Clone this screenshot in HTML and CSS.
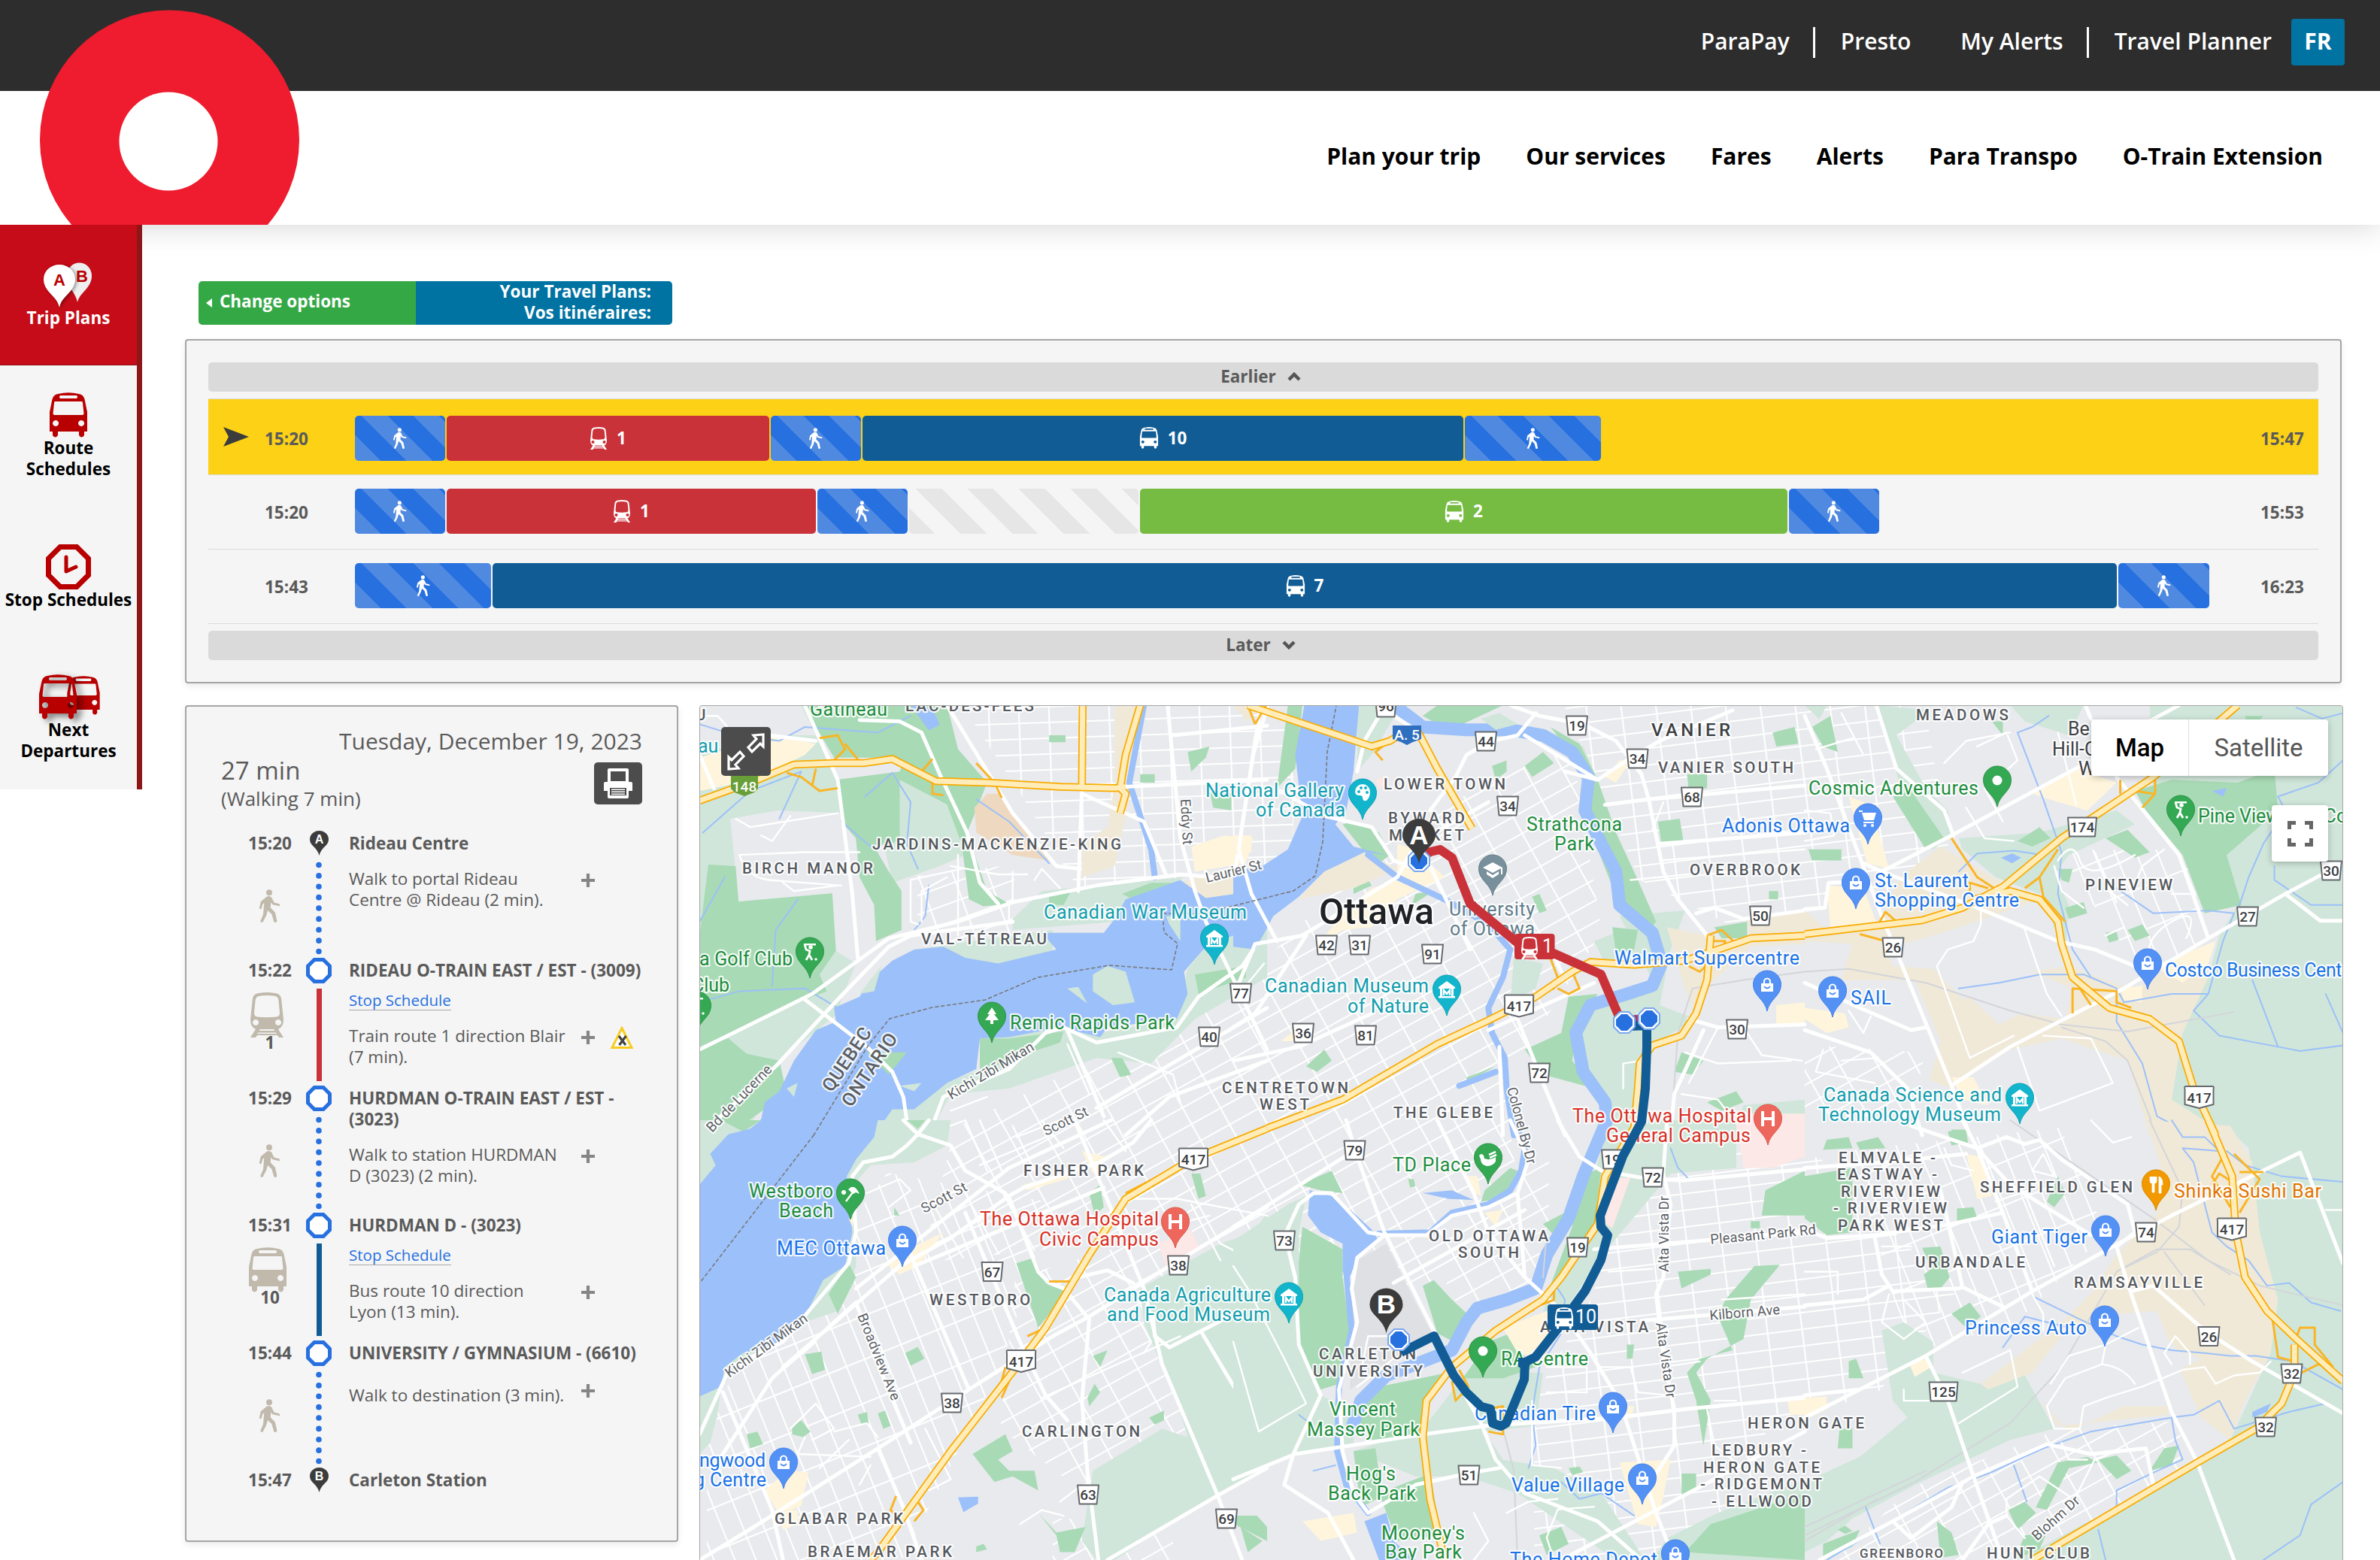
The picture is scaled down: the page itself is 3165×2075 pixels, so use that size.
FILE: index.html
```html
<!DOCTYPE html>
<html lang="en">
<head>
<meta charset="utf-8">
<title>Travel Planner</title>
<link rel="stylesheet" href="styles.css">
</head>
<body>
<svg class="sprite" aria-hidden="true">
  <defs>
    <symbol id="walk" viewBox="0 0 28 44"><circle cx="13" cy="4.3" r="4"/><path d="M10 9.5q3.5-1.500 6 1l3.500 7 6.500 1.800q2 1 .8 3l-9.300-2-2-3-.8 7 6.200 6.500 2.500 11.500q-1 2.600-4 1.200l-3-10.500-5.400-5-2 7-4.500 8.500q-2.500 1-3.200-1.200l3.700-9 1.300-15-2 1.500-1.700 6q-2 1-2.800-1l2-8.600z"/></symbol>
    <symbol id="train" viewBox="0 0 46 60"><path fill-rule="evenodd" d="M12 1q11-2 22 0 7 1 8 7l3 28q0 10-7 13l7 11h-6l-2-3H10l-2 3H1l7-11q-7-3-7-13L4 8q1-6 8-7zM12 5q-4 1-4.500 6L6 27q0 5 4 5.500 13 1.500 26 0 4-.5 4-5.500l-1.500-16Q38 6 34 5 23 3 12 5zM8 36a4 4 0 1 0 .1 0zm30 0a4 4 0 1 0 .1 0zM14 49l-1.500 2h21L32 49zm-3 4.500L10 55h26l-1-1.500z"/></symbol>
    <symbol id="bus" viewBox="0 0 52 60"><path fill-rule="evenodd" d="M12 2q14-3.500 28 0 6 1 7.500 7L51 26v26h-4v5q-3.500 5-7 0v-5H12v5q-3.500 5-7 0v-5H1V26L4.500 9Q6 3 12 2zM15 4q-2 2 0 4h22q2-2 0-4zM8 12q-1 0-1 2L5.500 28q0 2 2 2h37q2 0 2-2L45 14q0-2-1-2zM9 37a4 4 0 1 0 .1 0zm34 0a4 4 0 1 0 .1 0z"/></symbol>
    <symbol id="octagon" viewBox="0 0 34 34"><path d="M11 2.500h12L31.500 11v12L23 31.500H11L2.500 23V11z" fill="#fff" stroke="#2770e0" stroke-width="5"/></symbol>
    <symbol id="plus" viewBox="0 0 18 18"><path d="M9 0v18M0 9h18" stroke="#858585" stroke-width="4.200"/></symbol>
    <symbol id="dots" viewBox="0 0 8 124"><path d="M4 4.500V120" stroke="#2770e0" stroke-width="7.600" stroke-linecap="round" stroke-dasharray="0 14.380"/></symbol>
  </defs>
</svg>

<header class="header">
  <div class="topbar">
    <nav class="topnav">
      <a>ParaPay</a><i class="divider"></i><a>Presto</a><a class="wide">My Alerts</a><i class="divider"></i><a>Travel Planner</a><a class="lang">FR</a>
    </nav>
  </div>
  <nav class="mainnav"><a>Plan your trip</a><a>Our services</a><a>Fares</a><a>Alerts</a><a>Para Transpo</a><a>O-Train Extension</a></nav>
  <svg class="logo" viewBox="0 0 345 286"><circle cx="172.500" cy="173" r="172.500" fill="#ee1c2e"/><circle cx="171" cy="175" r="65.500" fill="#fff"/></svg>
</header>

<div class="page">
  <aside class="sidebar">
    <a class="side-item active"><svg width="70" height="60" viewBox="0 0 70 60"><path d="M47 53C44 38 33 34 33 18a16 17 0 0 1 33 0c0 16-16 22-19 35z" fill="#eee"/><path class="front" d="M23 60C20 44 2 40 2 22a21 19 0 0 1 42 0c0 18-18 22-21 38z" fill="#fff"/><text x="15" y="31">A</text><text x="45" y="26">B</text></svg>Trip Plans</a>
    <a class="side-item"><svg width="52" height="60" fill="#b80000"><use href="#bus"/></svg>Route<br>Schedules</a>
    <a class="side-item"><svg width="60" height="60" viewBox="0 0 60 60"><path d="M19 3.500h22L56.500 19v22L41 56.500H19L3.500 41V19z" fill="none" stroke="#b80000" stroke-width="7"/><path d="M27 17v19l13-6" fill="none" stroke="#b80000" stroke-width="5" stroke-linecap="round" stroke-linejoin="round"/></svg>Stop Schedules</a>
    <a class="side-item"><svg class="shade" width="82" height="60" fill="#b80000"><use href="#bus" x="38" y="2" width="46" height="52"/><use class="front" href="#bus" x="1" y="0" width="52" height="60"/></svg>Next<br>Departures</a>
  </aside>

  <main class="content">
    <div class="switcher"><a class="change"><span class="tri"></span>Change options</a><div class="plans">Your Travel Plans:<br>Vos itinéraires:</div></div>

    <section class="panel trips">
      <div class="shift">Earlier <svg width="18" height="12" viewBox="0 0 18 12"><path d="M2 10l7-7 7 7" fill="none" stroke="#555" stroke-width="4.500"/></svg></div>
      <div class="trip selected">
        <svg class="arrow" width="34" height="26" viewBox="0 0 34 26"><path d="M0 0l34 13L0 26l7-13z" fill="#3c3c3c"/></svg><span class="time">15:20</span>
        <div class="track">
          <div class="seg foot" style="width:120px"><svg width="18" height="28"><use href="#walk"/></svg></div>
          <div class="seg red" style="width:429px"><svg width="24" height="30"><use href="#train"/></svg>1</div>
          <div class="seg foot" style="width:120px"><svg width="18" height="28"><use href="#walk"/></svg></div>
          <div class="seg blue" style="width:799px"><svg width="26" height="29"><use href="#bus"/></svg>10</div>
          <div class="seg foot" style="width:181px"><svg width="18" height="28"><use href="#walk"/></svg></div>
        </div>
        <span class="time">15:47</span>
      </div>
      <div class="trip">
        <span class="arrow"></span><span class="time">15:20</span>
        <div class="track">
          <div class="seg foot" style="width:120px"><svg width="18" height="28"><use href="#walk"/></svg></div>
          <div class="seg red" style="width:491px"><svg width="24" height="30"><use href="#train"/></svg>1</div>
          <div class="seg foot" style="width:120px"><svg width="18" height="28"><use href="#walk"/></svg></div>
          <div class="seg wait" style="width:305px"></div>
          <div class="seg green" style="width:861px"><svg width="26" height="29"><use href="#bus"/></svg>2</div>
          <div class="seg foot" style="width:120px"><svg width="18" height="28"><use href="#walk"/></svg></div>
        </div>
        <span class="time">15:53</span>
      </div>
      <div class="trip">
        <span class="arrow"></span><span class="time">15:43</span>
        <div class="track">
          <div class="seg foot" style="width:181px"><svg width="18" height="28"><use href="#walk"/></svg></div>
          <div class="seg blue" style="width:2160px"><svg width="26" height="29"><use href="#bus"/></svg>7</div>
          <div class="seg foot" style="width:121px"><svg width="18" height="28"><use href="#walk"/></svg></div>
        </div>
        <span class="time">16:23</span>
      </div>
      <div class="shift">Later <svg width="18" height="12" viewBox="0 0 18 12"><path d="M2 2l7 7 7-7" fill="none" stroke="#555" stroke-width="4.500"/></svg></div>
    </section>

    <div class="columns">
      <section class="panel details">
        <div class="date">Tuesday, December 19, 2023</div>
        <div class="summary">
          <div><div class="duration">27 min</div><div class="walking">(Walking 7 min)</div></div>
          <a class="print"><svg width="38" height="40" viewBox="0 0 38 40"><path d="M5 0q0 0 2 0h24q2 0 2 2v16h3q2 0 2 2v10h-5v8q0 2-2 2H7q-2 0-2-2v-8H0V20q0-2 2-2h3V2q0-2 2-2zM9 4v13h20V4zM8 26v10h22V26zM10 27.500h18v1.500H10zm0 3h18V32H10zm0 3h18V35H10z" fill="#fff" fill-rule="evenodd"/></svg></a>
        </div>
        <div class="leg first">
          <div class="when"><b>15:20</b><svg class="walkman" width="28" height="44"><use href="#walk"/></svg></div>
          <div class="line"><svg class="pin" width="25" height="34" viewBox="0 0 25 34"><path d="M12.500 33C10 22 0 20 0 11.500a12.500 11.500 0 0 1 25 0C25 20 15 22 12.500 33z" fill="#3c3c3c"/><text x="12.500" y="17">A</text></svg><svg width="8" height="124"><use href="#dots"/></svg></div>
          <div class="what"><b>Rideau Centre</b><div class="desc"><p>Walk to portal Rideau<br>Centre @ Rideau (2 min).</p><svg class="more" width="18" height="18"><use href="#plus"/></svg></div></div>
        </div>
        <div class="leg ride">
          <div class="when"><b>15:22</b><svg width="46" height="60"><use href="#train"/></svg><b class="route">1</b></div>
          <div class="line"><svg width="34" height="34"><use href="#octagon"/></svg><span class="bar red"></span></div>
          <div class="what"><b>RIDEAU O-TRAIN EAST / EST - (3009)</b><a>Stop Schedule</a><div class="desc"><p>Train route 1 direction Blair<br>(7 min).</p><svg class="more" width="18" height="18"><use href="#plus"/></svg><svg class="warn" width="30" height="30" viewBox="0 0 30 30"><path d="M15 2.500L28 28.500H2z" fill="#fff" stroke="#f8cc1c" stroke-width="3"/><path d="M11 13l9 12M20.500 13l-9 12" stroke="#444" stroke-width="3.200"/></svg></div></div>
        </div>
        <div class="leg two">
          <div class="when"><b>15:29</b><svg class="walkman" width="28" height="44"><use href="#walk"/></svg></div>
          <div class="line"><svg width="34" height="34"><use href="#octagon"/></svg><svg width="8" height="124"><use href="#dots"/></svg></div>
          <div class="what"><b>HURDMAN O-TRAIN EAST / EST -<br>(3023)</b><div class="desc"><p>Walk to station HURDMAN<br>D (3023) (2 min).</p><svg class="more" width="18" height="18"><use href="#plus"/></svg></div></div>
        </div>
        <div class="leg ride">
          <div class="when"><b>15:31</b><svg width="52" height="60"><use href="#bus"/></svg><b class="route">10</b></div>
          <div class="line"><svg width="34" height="34"><use href="#octagon"/></svg><span class="bar blue"></span></div>
          <div class="what"><b>HURDMAN D - (3023)</b><a>Stop Schedule</a><div class="desc"><p>Bus route 10 direction<br>Lyon (13 min).</p><svg class="more" width="18" height="18"><use href="#plus"/></svg></div></div>
        </div>
        <div class="leg last">
          <div class="when"><b>15:44</b><svg class="walkman" width="28" height="44"><use href="#walk"/></svg></div>
          <div class="line"><svg width="34" height="34"><use href="#octagon"/></svg><svg width="8" height="124"><use href="#dots"/></svg></div>
          <div class="what"><b>UNIVERSITY / GYMNASIUM - (6610)</b><div class="desc"><p>Walk to destination (3 min).</p><svg class="more" width="18" height="18"><use href="#plus"/></svg></div></div>
        </div>
        <div class="leg">
          <div class="when"><b>15:47</b></div>
          <div class="line"><svg class="pin" width="25" height="34" viewBox="0 0 25 34"><path d="M12.500 33C10 22 0 20 0 11.500a12.500 11.500 0 0 1 25 0C25 20 15 22 12.500 33z" fill="#3c3c3c"/><text x="12.500" y="17">B</text></svg></div>
          <div class="what"><b>Carleton Station</b></div>
        </div>
      </section>

      <section class="map">
        <svg class="canvas" viewBox="931 939 2185 1136" width="2185" height="1136">
          <defs>
            <pattern id="grid0" width="40" height="21" patternUnits="userSpaceOnUse" patternTransform="rotate(-2)"><path d="M0 1H40M1 0V21"/></pattern>
            <pattern id="grid8" width="46" height="22" patternUnits="userSpaceOnUse" patternTransform="rotate(-7)"><path d="M0 1H46M1 0V22"/></pattern>
            <pattern id="grid20" width="44" height="24" patternUnits="userSpaceOnUse" patternTransform="rotate(-20)"><path d="M0 1H44M1 0V24"/></pattern>
            <pattern id="grid30" width="44" height="25" patternUnits="userSpaceOnUse" patternTransform="rotate(-29)"><path d="M0 1H44M1 0V25"/></pattern>
            <pattern id="grid70" width="54" height="26" patternUnits="userSpaceOnUse" patternTransform="rotate(68)"><path d="M0 1H54M1 0V26"/></pattern>
            <g id="pin-shape"><path d="M0 0C-3-16-18.500-20-18.500-35.500a18.500 18.500 0 0 1 37 0C18.500-20 3-16 0 0z"/></g>
            <g id="bag"><path d="M-8-37H8v11H-8z" fill="#fff"/><path d="M-4-36v-3a4 4.500 0 0 1 8 0v3" fill="none" stroke="#fff" stroke-width="2.200"/><path d="M-4-33q4 5 8 0" fill="none" stroke="#4f8ff5" stroke-width="2"/></g>
            <g id="shop" fill="#5491f5" stroke="#4380ea"><use href="#pin-shape"/><g stroke="none"><use href="#bag"/></g></g>
            <g id="museum"><use href="#pin-shape" fill="#12b5cb" stroke="#0f9fb3"/><path d="M-11-38L0-46l11 8v2H-11zM-9-36h3v11h-3zM6-36h3v11H6zM-11-26h22v2.500H-11z" fill="#fff"/><path d="M-4-27v-7l4 5 4-5v7" fill="none" stroke="#fff" stroke-width="2.400"/></g>
            <g id="green"><use href="#pin-shape" fill="#34a853" stroke="#2c9347"/></g>
            <g id="golf"><use href="#green"/><path d="M-8-46H8v2.500H-8z" fill="#fff"/><circle cx="1" cy="-41" r="2.800" fill="#fff"/><path d="M-7-45l2 7 5 2-1 5-4 7M-1-31l4 7" fill="none" stroke="#fff" stroke-width="2.800"/><circle cx="8" cy="-25" r="1.800" fill="#fff"/></g>
            <g id="spot"><use href="#green"/><circle cy="-35" r="6.500" fill="#fff"/></g>
            <g id="hospital"><use href="#pin-shape" fill="#ee675c" stroke="#d9564c"/><path d="M-7-45v20M7-45v20M-7-35H7" stroke="#fff" stroke-width="4"/></g>
            <g id="sh2" class="shield"><path d="M-14-12.500h28L11.500 12.500h-23z"/></g>
            <g id="sh3" class="shield"><path d="M-19-12.500h38L17 12.500h-34z"/></g>
            <g id="sh4" class="shield"><path d="M-18-14.500h36q2 0 1 4v20L0 14.500-19 9.500v-20q-1-4 1-4z"/></g>
            <g id="stop"><path d="M-6-14H6L14-6V6L6 14H-6L-14 6V-6z" fill="#fff" stroke="#7ba8ee" stroke-width="2"/><path d="M-4-11H4L11-4V4L4 11H-4L-11 4V-4z" fill="#2770e0"/></g>
            <g id="big-pin"><path d="M0 0C-4-20-22-24-22-38a22 22 0 0 1 44 0C22-24 4-20 0 0z" fill="#3c3c3c"/></g>
          </defs>
          <rect x="931" y="939" width="2185" height="1136" fill="#e8eaed"/>
          <g class="hatch">
            <path fill="url(#grid0)" d="M1280 939H1720V1120L1600 1260 1460 1220 1420 1160 1360 1060z"/>
            <path fill="url(#grid20)" d="M1220 1165L1350 1150 1345 1280H1220z"/>
            <path fill="url(#grid30)" d="M1225 1680L1270 1500 1600 1340 1700 1260 1860 1100 2090 990 2130 1240 2000 1440 2020 1590 1900 1720 1500 1650z"/>
            <path fill="url(#grid30)" d="M1350 1700L1550 1640 1580 1900 1460 2000 1330 1900z"/>
            <path fill="url(#grid70)" d="M940 2075V1880L1180 1560 1400 1600 1330 1820 1200 2075z"/>
            <path fill="url(#grid8)" d="M2080 939H2560L2600 1180 2300 1230 2180 1170z"/>
            <path fill="url(#grid30)" d="M1880 1620L2060 1540V1700L1940 1740z"/>
            <path fill="url(#grid8)" d="M2150 1500L2420 1540 2600 1720 2500 1850 2350 1900 2300 2075H2040V1860L2120 1720z"/>
            <path fill="url(#grid70)" d="M2460 1530L2740 1500 2800 1640 2680 1760 2540 1800zM2730 1130H2920V1300L2840 1280z"/>
            <path fill="url(#grid30)" d="M2440 2075L2540 1980 2740 1900 2900 1890V1980L2760 2075zM1400 2020H1560V2075H1400zM2400 1390L2560 1400 2540 1490 2400 1480z"/>
          </g>

          <g transform="translate(925 930) scale(.4847 .3699)">
            <path class="lite" d="M11 22H300L345 160 390 300 420 410 225 400 95 430 118 728 375 698 385 905 440 950 400 1080 390 1130 220 1310 190 1450 130 1568H11zM560 290L700 390 740 560 670 600 540 660 520 540zM950 690L1340 640 1150 800 870 830 870 790zM490 1568L540 1475 690 1380 780 1330 790 1210 1000 1160 1110 1200 1320 1150 1350 970 1400 890 1568 800V1000L1500 1050 1370 1150 1250 1310 1100 1290 860 1400 700 1420 640 1568zM600 900L760 870 980 830V910L830 970z"/>
            <path class="land" d="M11 22H290L330 130 200 130 11 200z"/>
            <path class="park" d="M300 22H690L720 180 800 300 745 480 800 690 860 735 790 745 750 720 730 520 690 380 560 290V510L490 530 530 620 565 690V830L495 870 490 740 450 640 440 500 400 440 385 290 560 260 570 230 540 210 380 210 330 100zM35 595L110 600 118 728 375 698 385 905 340 990 360 1050 280 1090 11 1250V850zM11 1250L90 1220 140 1275 230 1300 250 1420 140 1520 11 1568zM970 130h45v25h-45zM1350 190l60-20-10 40-40 50zM1220 270h40v30h-40zM1410 330l60 10v60l-50-10zM970 700l60-10-20 50h-40zM1170 700l80-40 60 0-110 60zM1370 990l140-30v40l-130 60zM1140 1290l30 0 25 60-30 10zM780 1220l80 0 150-25-10 40-140 60-80 50z"/>
            <path class="sand" d="M1150 22H1240L1180 420 1150 600 1060 640V520L1130 460 1150 300zM1330 660l160-60 0 100-130 40z"/>
            <path d="M800 340L830 340 900 470 970 580 870 560 770 480 765 390z" fill="#eed9c0"/>
            <path class="shopping" d="M11 210L210 130 330 160 300 200 160 290 11 330zM1360 530l90-40 80 10-20 90-140 30z"/>
            <path class="water" d="M1568 630L1480 700 1400 715 1330 650 1180 720 1150 790 1120 840 950 840 990 900 830 950 740 930 680 890 600 900 540 940 480 1010 450 1070 380 1110 385 1160 330 1190 270 1300 230 1410 190 1450 180 1510 130 1568H490L540 1475H600L690 1380 770 1330 780 1220 860 1215 1000 1180 1110 1215 1130 1180 1320 1150 1350 1060 1340 980 1400 890 1568 800zM590 22l60 10 20 60-30 20z"/>
            <path class="lite" d="M1090 990l40-30 50 20 25 110-60 10-55-50zM1020 1040l30-5 25 60zM560 1390l60-10-20 30zM250 1400l30-20-10 50zM450 1060l60-100-20 90zM1290 780l40 0 0 90-30-60z"/>
            <path class="park" d="M470 1270l110 0-50 80z"/>
            <path class="creek" d="M11 90L110 130 230 150 300 100 500 120 590 60M20 480L150 330 290 260 230 430M11 800L80 640M210 1030l10-200 60-110M11 1090L120 1050 300 1040 390 1110M465 350L540 265 590 370 580 520 610 610M640 670L630 780 600 830M770 360L860 440 970 590M400 440L480 530"/>
            <path class="stream" d="M1230 22L1190 300 1250 540 1260 640"/>
            <path class="minor" d="M110 430L150 460 390 410M180 490l30 20 50-90M590 650v150l20 10M590 650l140-40M620 800v-110l70-50M720 560v240M930 650l20-40 50 70M120 560q20 80 80 90l200 20M120 560l180-10 150 0M240 660l30 30 120-20M11 60h50l40 60M870 620v100M700 600l130 30 80 0M860 740v60M720 800v50M700 1480l100-50M1020 1240l60 180M1160 1270l150 80 20 100M1560 950l-50 80"/>
            <path class="road" d="M300 22L390 290 430 700 445 930M690 22L870 410 990 600 1055 610M450 75L560 80 620 120 670 270 745 480 780 660 830 735M11 1260L320 1060 530 860 720 800 870 730 1100 670 1330 630 1420 640M11 1568L220 1320 390 1080 530 890 590 850 870 800M300 1080L470 1250 540 1340 570 1430 580 1520 610 1568M640 1568L680 1430 860 1330 960 1200 1010 1180 1100 1235 1320 1180 1380 1070 1500 960 1540 880 1480 620 1500 450 1530 200 1568 30M1295 22L1330 500 1370 690 1400 800 1568 1260M1100 1470L1320 1300 1568 1110M1180 1568L1300 1430 1568 1300M1060 340L1230 440 1290 630M1060 320L1050 690M1180 315L1568 290M1310 130L1568 95M1020 1190L1120 1500M11 200L50 320M200 130L330 150"/>
          </g>

          <g transform="translate(1640 930) scale(.4847 .3699)">
            <path class="lite" d="M340 22H460L380 200 340 260zM880 120L960 170 1000 290 960 300zM1060 780L1240 760 1200 900 1170 1100 1270 1150 1140 1250 1100 1568H1040L970 1340 930 1200 990 1100 1150 1010zM770 930L850 950 830 1040 760 1090zM990 870l100-50 60 120-130 10zM1400 1460l168-20v128h-200z"/>
            <path class="park" d="M150 22L190 22 170 250 120 320zM520 60L560 22H740L620 95 560 90zM870 100L950 160 1000 290 1050 480 1110 650 1160 800 1140 830 1060 740 1000 540 960 390 980 280 920 180zM330 440L400 480 430 560 390 600 300 450zM920 1070L1000 1060 950 1150 930 1300 990 1400 850 1350 800 1260 900 1200zM710 240l40-20 0 40-30 30zM800 240l50-50 30 40-60 50zM1480 120l60-20 10 60-60 10zM1245 270h55v50l-50 10zM1165 440l60-10 10 80-60 10zM330 660l30-30 20 40-50 30zM820 710l20-10 20 60-20 10zM1040 820l70 10-10 70-50 10zM1320 820l90-20 0 60-70 0zM1230 1270l60 30-30 50-50-10zM640 1360l80-40-80 60zM1470 690h25v30h-25zM500 700l50-10-60 50zM200 1320l50-60 20 40-40 40zM1300 1450l80-40 20 40-60 30z"/>
            <path class="sand" d="M1190 820L1300 850 1430 880 1310 1020 1260 1110 1230 1000zM1410 790L1568 760V880L1420 890zM180 720L250 620 360 550 450 610 330 680zM0 22h80l-40 60z"/>
            <path class="shopping" d="M380 680L450 650 450 520 500 540 580 640 450 720 380 820 300 830 230 890 300 770zM1060 220l30 0-40 80-30-20zM1490 1100l78-10v80l-78 0zM0 490l50 0 0 60-50 10zM130 1230l60-60-20 60z"/>
            <path class="pink" d="M1370 1490l198 0v78h-190zM390 290l40-20-30 60z"/>
            <path class="water" d="M195 22H345L330 260 310 400 280 450 330 530 420 560 360 550 250 620 180 710 110 780 90 830 60 900 0 890V620L80 600 150 540 190 420 170 200z"/>
            <path class="river" d="M450 30L520 100 640 110 760 110 850 130 930 190 975 280 965 400 1010 520 1050 620 1060 740 1150 840 1175 950 1150 1030 1080 1060 980 1100 940 1200 960 1340 1020 1450 1030 1568"/>
            <path class="lite" d="M680 70l50-20 50 40-60 20z"/>
            <path class="stream" d="M370 560L450 640 580 720 700 810 760 900 740 1000 700 1110 710 1200 745 1290 750 1400 770 1568M620 1390l100-50"/>
            <path class="rail" d="M1568 980L1400 1010 1260 1040 1220 1200 1200 1568"/>
            <path class="minor" d="M1090 650l160-20M1240 1270l90 40 200-10M1230 1420l100 20 60 100M1070 1400v-90l50-10M1110 1130l30 100M1170 580l398-40M1150 470l30-100M1400 1180l50 100 110 20M1330 1180l-80 200"/>
            <path class="road" d="M75 22L60 150 15 540 50 700M130 330L250 420 380 460 440 580 480 600M340 260L360 150 400 60 440 60 500 110M830 50L780 130 710 150 640 200 610 280 540 400M840 60L960 90 1050 150 1120 270 1140 360 1180 620 1220 720 1300 850M760 22L840 60M800 130L1000 290 1080 220 1170 150 1370 40M1020 380L1140 360 1568 310M1270 770L1320 750 1400 790 1568 760M0 1070L60 880 190 850 450 640M50 700L120 870M780 1150L850 1380 910 1568M700 1190L990 1020M1250 1150L1330 1180 1568 1170M1170 520L1568 480M910 260L1000 290M1290 1190L1210 1420 1200 1568M450 640L500 520 700 370M540 600L650 900M730 1250L740 1568M0 1300L180 1250 380 1130M0 1180L60 1130 200 850M880 920l20 60"/>
          </g>

          <g transform="translate(2400 930) scale(.4879 .3699)">
            <path class="lite" d="M560 22H760L720 130 600 80zM940 22H1467V1568H1150L1000 1440 1010 1150 1100 1000 1130 850 1180 740 1090 600 950 350zM200 22L340 40 250 130 330 320 390 400 400 490 350 540 290 460zM420 500L640 480 850 400 900 450 720 560 640 700 520 640 430 540zM650 540l70 200-10 180-60-200zM0 22h60l-20 50z"/>
            <path class="park" d="M900 330L1000 290 1180 300 1280 250 1290 400 1150 560 1190 740 1090 770 1030 560 930 400zM20 100L70 60 90 190 50 170zM240 350L290 330 380 500 330 540zM580 510l60-50 30 40-50 30zM820 500l60-30 60 80-40 20zM690 610l40 0-10 50-20-10zM710 750l50-20 10 40-50 20zM880 830l40-20 20 40-40 20zM820 840l30-5 5 30-25 10zM435 890l35-15 0 30-25 20zM10 540l90 0 0 40-80 0zM400 1548h40v20h-40zM510 80l30 0 0 50zM1200 60l50 0-40 60z"/>
            <path class="sand" d="M370 530L540 660 640 720 400 830 220 900 240 960 350 970 430 1080 620 980 720 960 900 1050 1000 960 1100 1000 1030 1200 1000 1440 1150 1568H940L880 1300 700 1220 560 1260 400 1400 340 1370 370 1230 300 1010 100 1010 130 880 0 870V760L60 830 200 820 260 640z"/>
            <path class="land" d="M440 1060l180-80 110 60-20 110-120-20-60 40zM250 880l400-60 60 130-220 40-200-30z"/>
            <path class="shopping" d="M60 670L160 680 200 820 70 820zM120 350L180 380 230 610 170 590zM620 340L740 250 850 300 770 400 690 370zM950 960L1120 870 1100 950 1030 1020zM0 1110L110 1130 120 1180 60 1200 0 1150zM860 1040l60-10 0 60-50-10zM400 1360h60l40 100-70-20z"/>
            <path class="creek" d="M665 60L620 100 580 120 650 360 700 550 690 700 730 900 780 1000 850 1040 870 1090 1000 1060 1100 1060 1140 870 1170 770 1100 760 950 770 850 680M1467 220L1400 300 1290 350 1310 400 1250 520 1210 640 1180 760M420 1040L530 1020 640 990 760 990 850 1040 850 1160 920 1310 960 1500 1060 1568M1100 1060L1060 1120 1130 1210 1290 1250 1350 1265 1467 1245M1220 1010L1290 1250M1420 1060L1467 1200M420 620L470 555 570 545 650 560M1340 30l70 40 57-20M1280 600l0 50 100 90 87 0"/>
            <path class="water" d="M535 570l30-15 25 15-25 20zM1110 330l40-10-10 30z"/>
            <path class="rail" d="M0 980L120 970 330 1020 560 1120 700 1170 880 1195 1170 1125M700 1180L820 1230 880 1300 960 1568"/>
            <path class="minor" d="M480 760v50l-20 60-70 30-30 60 90 330 120-80M650 1210l130 10 60 160-200 100-60-230M540 440l-50-120M690 120l50 260M470 170l80-50 30 100-50 60M380 230l60-80 120-30M440 390l50 110 80 10M790 550l60 180M690 580q40-80 60 0t150-20M890 700l30-100 60-60M940 960q-20-100 60-160t40 60M820 850l50-30M600 830l60 230 40 80M120 1120l40 80 20-60M0 400l70 10 10 80-80 20M100 50l60 150M30 180l100-40M680 600l20 90 60 60M1000 700l50 0M100 1300l100-10M50 1260l-20 80 160 40M820 680l60 60"/>
            <path class="road" d="M0 60L60 250 210 780 400 1390 450 1568M195 22L250 250 380 400 405 490M210 620L400 490 780 220M400 1390L560 1250 870 1040 1100 860 1310 700 1467 590M850 280L1020 560 1100 860M1310 700L1405 797 1467 797M0 1190L180 1270 280 1400 320 1568M470 750L690 870 790 900 900 960M160 590L210 620 470 750M0 755L55 750 65 660 160 655M0 1020L150 1110 290 1190 330 1180M765 22L780 70M910 100L1020 22"/>
          </g>

          <g transform="translate(925 1490) scale(.4847 .3731)">
            <path class="lite" d="M500 0H700L690 90 600 150 480 160 440 220 440 520 390 680 300 720 130 860 70 950 60 1050 40 1150 11 1190V0H180L40 180 300 560 410 200zM1220 600L1440 440 1530 400 1568 330V1240L1430 1330 1150 1568H1100L1060 1500 1090 1250 1280 1100 1350 1130 1330 1040 1230 720z"/>
            <path class="park" d="M70 0h110l-50 40zM420 510L440 560 390 690 365 620zM880 510L930 490 960 580 1020 610 940 740zM760 1190L850 1120 870 1180 830 1210 860 1250 930 1250 940 1320 870 1270 820 1290zM300 835l45-10 10 65-35 15zM575 830l35-22 18 42-38 25zM140 1120l30-10 15 45-35 15zM1080 260l30-30 10 80-25 30zM1360 190l25 0 15 80-20 10zM265 1090l25-20 25 40-20 20-30-10zM445 1050l25-10 5 40-20 5zM500 1045l20-10 15 55-20 10zM1090 840l40-20-20 60zM1075 990l20-50 15 30-30 50zM1245 1060l40-25 0 35-25 15zM940 1400l50 70 80-20-30 90-40 0-10-60zM1480 1410l60 0 28 40v50l-90-60zM770 1520l20-10 10 20-30 10zM1520 490l48-40v50l-28 30zM545 310l15 30-15 0zM580 0h50l-20 30z"/>
            <path class="water" d="M180 0H500L490 60 440 140 415 200 430 400 410 520 350 570 300 700 240 790 130 830 80 880 70 950 11 985V230L55 160 40 120 90 50 150 30zM720 1345l55-3 0 25-40 30z"/>
            <path class="pink" d="M1270 440L1360 390 1380 450 1290 520z"/>
            <path class="shopping" d="M520 510l80-60 80-50-70 120-50 30zM190 1320l60-70 60 5-20 120-60 30zM220 1390l60 0 0 50-40 20zM900 230l120-40 0 20-110 40zM1060 110l60 20 20-10-50 70zM420 350l15 0-5 30z"/>
            <path class="minor" d="M470 260l90-50 30 40-60 60M700 20l40-20 60 180M780 0l60 180M870 20l60 160M950 0l60 100M880 60l120-60M780 160l200-110M1120 0l60 110M1180 280l140 0 248 60M1360 300l80 200M1320 370l90-30M1440 440l90 60 30 60M950 990l380-220M1220 720l30 70-20 40M240 890l90-100M260 1100l70-90 50 90-60 40M380 1110l90-30 30 50M300 1130l-20 60 200 10M340 1240l80-100M450 1300l30-70M630 1100l70 180-60 40M890 1440l60-50 60 20M1000 1360l50-50"/>
            <path class="road" d="M640 0L610 50 580 90 540 130 460 150 430 200 440 400 420 510 330 650 240 790 95 880 70 950 11 1120M570 0L610 50 700 90 740 180 850 260 880 340 940 540 970 580 1010 600 1080 710 1060 1000 1075 1250 1105 1568M11 1568L160 1450 500 1170 750 960 980 770 1080 700 1300 520 1568 310M1040 0L1230 600 1280 870 1430 1330 1500 1568M1130 1568L1430 1340 1568 1240M240 880L560 520 700 420 860 270 900 240 1110 150 1200 80 1250 0M440 600L860 170 1140 0M600 520L1120 240M70 1200L210 920 440 650M590 480L750 960M740 330L890 790 960 980 1020 1070M440 650L510 900 590 1150M500 1170L570 1380 620 1568M75 970L210 1390 240 1568M1255 700L1260 770 1300 810 1568 630M1050 560L1130 535 1200 580M1390 760L1550 1110"/>
          </g>

          <g transform="translate(1640 1490) scale(.4847 .3731)">
            <path class="lite" d="M0 430L150 300 200 270 180 400V800L240 980 330 1040 330 1160 160 1200 0 1280zM640 900H850L830 1090 690 1110 740 1210 880 1240 1010 1330 1130 1568H1050L780 1330 640 1270 500 1270 330 1180 520 1100zM1040 0H1380V170L1200 190 1000 500 900 700 850 680 960 300zM1190 1490L1330 1400 1568 1280V1568H1150z"/>
            <path class="park" d="M190 380L300 460 300 560 320 750 290 940 240 960 180 800V500zM690 250L760 170 780 180 740 280 680 290zM520 590L550 570 600 640 650 700 620 800 560 760zM630 920L700 790 760 760 790 830 830 880 740 920zM400 950L590 900 530 1000 510 1120 380 1140 330 1040zM400 1330L540 1260 570 1480 450 1500zM330 1180l60-10 20 170-60 40zM1350 640L1430 520 1500 515 1420 640 1400 780 1300 850 1270 900 1310 1000 1290 1160 1270 1000 1245 900 1280 850 1370 820 1330 700zM1460 250L1568 180V340L1450 340zM950 200L1010 170 990 380 900 560 870 590 930 380zM1220 540l90-10 0 20-80 50zM180 230l90-50 30 80-60-10zM840 1480l60-30 20 60-60 40zM1230 1260l40 0 0 60-40 20zM920 1240l30-5 10 20-30 10zM1240 1540L1310 1440 1568 1330V1568zM20 1450l60 50-40 40zM1080 800l20 0-5 50-15 0zM850 370l60-40-30 80zM1420 360h25v25h-25zM480 210l15 0 5 25-15 5z"/>
            <path class="pink" d="M1380 0H1568V130L1480 170H1400zM1060 205h30L1040 385 1010 360z"/>
            <path d="M340 500L420 440 500 650 550 770 470 830 320 960 330 600z" fill="#dfe0e4"/>
            <path class="shopping" d="M740 740L860 680 890 750 820 840 780 830zM190 1430L330 1400 340 1470 240 1500zM1060 1220L1200 1210 1180 1340 1160 1450 1110 1440zM690 330l50-10-20 60zM640 200l30 0 10 70-30-20zM1060 1020h40l-10 50zM1520 1000l48-10v60l-40 0z"/>
            <path class="water" d="M210 250L270 270 330 330 380 390 400 430 340 490 320 560 300 540V440L240 400 205 340zM520 260l80-10 60 35-70-5zM360 1430L420 1400 440 1500 500 1568H400z"/>
            <path class="stream" d="M400 405L540 400 600 330 700 300 760 250 790 180 800 100 770 0M310 540L325 750 290 950 285 1180 310 1300 370 1400"/>
            <path class="river" d="M1025 0L960 200 920 350 860 480 830 600 750 640 670 670 640 720 600 820 500 870 420 910 350 1000 325 1100"/>
            <path class="creek" d="M880 580l30 60-10 120-60 120-20 160 10 120-20 80M900 1290l50 60 60-20 90 80M1200 100l20 70 30 40M220 1250l60-20M180 1050l30 30"/>
            <path class="rail" d="M740 1100L770 1250 780 1568M860 400L850 560"/>
            <path class="minor" d="M0 790l70 320 130-100-60-160-100-250-40-80M820 1000v230l80 10M860 880l110 0 0 90-110 0M1000 880l90 0 20 90 80 10M750 1400l60-40 80-10M660 1400l40 100-40 68M880 1568l-20-80 30-100 100-10M1340 640l228-20M350 900l20-130 60 0M440 850l-100 100M1380 1000l-60 0M1300 1030l20 130 60 60M1180 880l100-20M1030 540l120-10"/>
            <path class="road" d="M0 380L330 110M310 0L340 130 415 400 550 750 600 900 680 1080 720 1210 800 1330 1000 1430 1120 1568M560 0L660 260 700 400 800 560 900 680 980 830 1060 1000 1160 1400 1210 1568M890 0L950 130 1010 180 1120 205 1230 215 1568 175M990 460L1568 400M1190 0L1180 190 1200 300 1180 560 1160 620 1180 840 1210 1030 1210 1160 1160 1260M0 1280L170 1190 520 1120 690 1090 1050 1060 1240 1030 1568 990M140 400L170 560 180 800 240 980 165 1190 140 1300 260 1400 330 1568M145 400L180 300 220 260 270 260 370 400 415 410 530 410 600 340 700 310 780 260 800 560M415 410L340 490 325 600 340 720 290 960 300 1180 330 1330 370 1400 500 1300 640 1260 730 1240M900 1568L1160 1390 1568 1110M1120 715L1568 665M440 580L660 420 800 320M760 0L810 140 780 260"/>
          </g>

          <g transform="translate(2400 1490) scale(.4879 .3731)">
            <path class="lite" d="M1130 0H1467V1568H580L1070 1220 1160 1140 1270 830 1240 400 1210 100zM210 750L270 720 350 790 350 900 480 940 600 910 680 1100 560 1140 300 1300 130 1420 60 1500 0 1540V1290L150 1200 280 1060 240 1000z"/>
            <path class="sand" d="M930 0L1160 20 1220 150 1240 400 1290 640 1270 830 1200 1000 1160 1140 1080 1060 1020 880 960 680 860 690 700 770 620 900 500 960 480 940 700 720 780 620 850 480 960 330 970 160zM640 1000l50 90 300-40 0-30-120 0-150 90z"/>
            <path class="land" d="M960 740l60 80 60 30-60 40z"/>
            <path class="park" d="M0 200L130 170V400L60 410 0 350zM320 455L370 450 395 560 370 600H335L325 550 345 530zM400 690l50-40 30 50-40 40zM800 1210l50-15 40 55-40 30zM555 1390l45-30 30 40-50 60zM360 1430l40 40 20 80-50 10zM95 1100h35v70l-40 0zM415 315l45-5 10 40-55 10zM390 40l50-5 5 45-45 10zM60 70l60-10 10 40-80 5zM140 80l60-20 20 40-70 5zM690 200l20 60-30 50-20-20zM120 860l20-10 20 70-40 0zM630 1380l60-160 80-20 30 20-80 20-60 150zM980 1170l40-10-20 70-60 20zM90 1460l20-15 20 20-20 10zM50 1510l100-50-20 60-80 48zM600 1480l60-10-20 60-70 38z"/>
            <path class="shopping" d="M440 120L480 130 510 270 470 280zM285 870L330 850 345 880 300 915zM0 990L60 985V1030L0 1070z"/>
            <path class="creek" d="M1000 0L1030 60 1090 60 1130 110 1030 100 1060 150 1090 300 1110 400 1150 450 1210 500 1260 590 1320 580 1380 650 1460 680M1150 110L1200 160 1300 200 1467 220M625 630L750 710 850 770 920 800 1000 820 1090 830 1160 840 1230 840 1330 860 1467 960M540 810L600 700 720 740M60 1568L390 1310 500 1260 650 1170 780 1110 1000 1060 1060 1050 1130 1000 1170 1100 1320 1040 1420 1010M1000 1060L1010 1140 1030 1210 960 1250 850 1320 850 1400M165 1375L205 1510M570 1230L605 1360M800 1460L820 1568M1467 1290L1380 1370 1350 1480 1250 1568"/>
            <path class="water" d="M1220 1040l50-30-10 30-40 20z"/>
            <path class="rail" d="M560 0L950 350 1100 500 1240 590 1467 660M940 0L1030 250 1020 380 960 470 850 540 700 880 560 1080 300 1290 0 1480M850 540L960 460 1050 460 1160 550M0 1450L330 1250M0 1500L200 1350M980 470L1090 660"/>
            <path class="minor" d="M210 450l80 0M650 120l-30 60 60 20zM780 0l60 80 50-20M820 800l90-60M820 800l-10 70-100 50-50 100 20 80 70 0 10-80 60-30 100-40 110-60 60-10 30 60 50-30 70-10 30-40M820 800l-100 40-50 100M810 870q60 10 90 70M1000 870l-20-40 30-60 40 60 0 40M560 820l20 130-160 130M430 900l130-80M230 620l-20 100 60 60 60-60-60-80M550 1410l0-60 90-80 80 70-10 60M550 1410l50 80M500 1440l50-30M270 960l0 40 70 0M700 1150l20 60 50 0M850 1180l-60 30-70 180M1420 320h47M380 100l20 60 60 20M520 290l90-40M0 540l90 0 0 80M600 260l80 260M620 620l30 70 0 60"/>
            <path class="road" d="M430 0L470 100 560 230 780 410M0 170L220 150 440 120M290 20L470 100 550 60 600 85 640 70 700 140 880 300 900 400 850 450 870 540 890 620 1000 1040 1070 1220 1170 1568M0 1060L150 960 330 840 620 610 840 450 1000 340 1350 115 1467 510M330 840L390 1000 460 1270 540 1568M0 390L60 420 190 410 400 370 540 330M0 660L160 640 230 590 240 610 420 600 430 595 540 665M190 410L210 550 240 610M470 100L540 330 620 610M370 250L400 420 430 595M890 610L950 590 1090 750 1220 860 1467 1045M40 1568L240 1430 460 1270 660 1155 780 1190 930 1170 950 1300M0 980L150 960M430 1568L500 1440 550 1410M240 1430l50 60 110-110 30-90"/>
          </g>

          <path class="border" d="M1082 1510L1155 1390 1183 1355 1240 1340 1310 1330 1380 1300 1475 1284 1558 1290 1566 1255 1548 1240 1546 1215 1600 1215 1640 1205 1720 1185 1749 1165 1759 1120 1765 1000 1777 939M1082 1510L931 1706"/>

          <g class="ramps">
            <path transform="translate(925 930) scale(.4847 .3699)" d="M340 140L390 130 410 180 380 220M410 160L450 225M250 265L290 280 340 330 390 320M320 310L330 250M650 215L620 260M650 300L650 340 680 345M770 230L820 300 840 355"/>
            <path transform="translate(1640 930) scale(.4847 .3699)" d="M40 22L60 90M90 22L60 90M410 170L390 190 410 220M1300 850L1340 830 1380 880M1310 870L1350 870 1340 910 1280 980 1250 960M870 930L890 1000 880 1040 860 1050M930 980L950 1040 920 1060 890 1040"/>
            <path transform="translate(2400 930) scale(.4879 .3699)" d="M400 500L430 560 470 640 540 700M690 540L640 640 600 680M640 640L650 710 710 800M860 290L860 340M955 290L955 340 920 390M900 330L950 340M730 1130L730 1040 850 1050 850 1090 890 1110M750 1040L780 1100M200 810L220 765 250 800M150 845L220 870M450 700L450 660 500 680"/>
            <path transform="translate(925 1490) scale(.4847 .3731)" d="M550 1340L535 1390 560 1420M600 1340L625 1390 600 1430M970 575L1030 575 1050 560M910 770L960 740M870 900L840 990M850 880L840 930M1180 260L1270 200"/>
            <path transform="translate(1640 1490) scale(.4847 .3731)" d="M620 890L645 950 610 1000 600 930M880 590L880 640 800 680M850 640L820 680M700 1030L740 1020 740 1120 700 1110M1030 150L1025 240"/>
            <path transform="translate(2400 1490) scale(.4879 .3731)" d="M1140 130L1110 200 1160 310M1110 230L1130 190 1165 220M1170 120L1240 210 1185 330M1185 185L1250 185M1335 790L1350 740 1390 740 1390 800 1440 880M1275 710L1290 845 1335 860M1340 910L1400 870 1440 880"/>
          </g>
          <g class="hw">
            <g id="highways">
              <path transform="translate(925 930) scale(.4847 .3699)" d="M11 365L170 290 270 235 380 230 460 230 540 215 600 255 660 295 800 300 1000 315 1150 320 1180 315M1062 22L1060 320M1220 22L1180 200 1165 320 1180 340 1165 410"/>
              <path transform="translate(1640 930) scale(.4847 .3699)" d="M40 22L380 170 430 150 455 130M500 100L560 250 655 465M93 1543L300 1440 560 1240 700 1155 830 1070 930 980 980 945 1100 955 1240 940 1330 900 1420 860 1568 850M1310 850L1300 1010 1270 1130 1230 1210 1150 1245 1115 1310 1110 1400 1100 1540"/>
              <path transform="translate(2400 930) scale(.4879 .3699)" d="M0 845L320 795 430 750 540 675 700 500 950 280 1180 22M460 720L560 690 640 720 690 800 700 880 730 1000 830 1110 940 1150 1020 1230 1060 1400 1120 1568"/>
              <path transform="translate(925 1490) scale(.4847 .3731)" d="M1568 30L1360 140 1180 280 1080 480 960 740 880 880 700 1180 500 1540 480 1568"/>
              <path transform="translate(1640 1490) scale(.4847 .3731)" d="M1100 26L1020 200 1000 370 900 560 850 640 720 750 600 880 530 1000 520 1130 540 1350 580 1568"/>
              <path transform="translate(2400 1490) scale(.4879 .3731)" d="M1100 0L1165 200 1175 400 1200 560 1260 680 1340 780 1467 930M1335 800L1335 900 1300 1010 1230 1100 1070 1220 620 1568"/>
            </g>
          </g>
          <g class="hw-fill"><use href="#highways"/></g>

          <g class="num">
            <g transform="translate(1650 1321)"><use href="#sh2"/><text y="7">77</text></g>
            <g transform="translate(1608 1379)"><use href="#sh2"/><text y="7">40</text></g>
            <g transform="translate(1843 941)"><use href="#sh2"/><text y="5">96</text></g>
            <g transform="translate(1976 986)"><use href="#sh2"/><text y="7">44</text></g>
            <g transform="translate(2097 965)"><use href="#sh2"/><text y="7">19</text></g>
            <g transform="translate(2177.500 1009)"><use href="#sh2"/><text y="7">34</text></g>
            <g transform="translate(2005 1072)"><use href="#sh2"/><text y="7">34</text></g>
            <g transform="translate(2250 1060)"><use href="#sh2"/><text y="7">68</text></g>
            <g transform="translate(2341 1218)"><use href="#sh2"/><text y="7">50</text></g>
            <g transform="translate(1764 1257)"><use href="#sh2"/><text y="7">42</text></g>
            <g transform="translate(1808 1257)"><use href="#sh2"/><text y="7">31</text></g>
            <g transform="translate(1905 1269)"><use href="#sh2"/><text y="7">91</text></g>
            <g transform="translate(1733 1374)"><use href="#sh2"/><text y="7">36</text></g>
            <g transform="translate(1816 1377)"><use href="#sh2"/><text y="7">81</text></g>
            <g transform="translate(2047 1427)"><use href="#sh2"/><text y="7">72</text></g>
            <g transform="translate(2310 1369)"><use href="#sh2"/><text y="7">30</text></g>
            <g transform="translate(2020 1338)"><use href="#sh4"/><text y="7">417</text></g>
            <g transform="translate(2769 1100)"><use href="#sh3"/><text y="7">174</text></g>
            <g transform="translate(3100 1158)"><use href="#sh2"/><text y="7">30</text></g>
            <g transform="translate(2989 1219)"><use href="#sh2"/><text y="7">27</text></g>
            <g transform="translate(2517.500 1260)"><use href="#sh2"/><text y="7">26</text></g>
            <g transform="translate(2924.500 1459.500)"><use href="#sh4"/><text y="7">417</text></g>
            <g transform="translate(1587 1542)"><use href="#sh4"/><text y="7">417</text></g>
            <g transform="translate(1319.500 1691.500)"><use href="#sh2"/><text y="7">67</text></g>
            <g transform="translate(1567 1683)"><use href="#sh2"/><text y="7">38</text></g>
            <g transform="translate(1358 1810.500)"><use href="#sh4"/><text y="7">417</text></g>
            <g transform="translate(1266 1866)"><use href="#sh2"/><text y="7">38</text></g>
            <g transform="translate(1447 1988)"><use href="#sh2"/><text y="7">63</text></g>
            <g transform="translate(1631 2020)"><use href="#sh2"/><text y="7">69</text></g>
            <g transform="translate(1801.500 1530)"><use href="#sh2"/><text y="7">79</text></g>
            <g transform="translate(1708 1650)"><use href="#sh2"/><text y="7">73</text></g>
            <g transform="translate(2144 1542)"><use href="#sh2"/><text y="7">19</text></g>
            <g transform="translate(2198 1566)"><use href="#sh2"/><text y="7">72</text></g>
            <g transform="translate(2098 1659)"><use href="#sh2"/><text y="7">19</text></g>
            <g transform="translate(1953.500 1962)"><use href="#sh2"/><text y="7">51</text></g>
            <g transform="translate(2854 1639)"><use href="#sh2"/><text y="7">74</text></g>
            <g transform="translate(2968 1635)"><use href="#sh4"/><text y="7">417</text></g>
            <g transform="translate(2937.500 1777.500)"><use href="#sh2"/><text y="7">26</text></g>
            <g transform="translate(3047.500 1827)"><use href="#sh2"/><text y="7">32</text></g>
            <g transform="translate(3013 1898)"><use href="#sh2"/><text y="7">32</text></g>
            <g transform="translate(2584.500 1851)"><use href="#sh3"/><text y="7">125</text></g>
          </g>
          <path d="M972 1031h36v18l-5 5-13 5-13-5-5-5z" fill="#689f38"/><text class="plate" x="990" y="1053">148</text>
          <path d="M1852 965h38v18q-10 3-19 8-9-5-19-8z" fill="#2f6fbf"/><text class="plate" x="1871" y="984">A. 5</text>

          <g class="street">
            <text transform="translate(947 1507) rotate(-46)" textLength="116">Bd de Lucerne</text>
            <text transform="translate(1570 1063) rotate(87)" textLength="61">Eddy St</text>
            <text transform="translate(1605 1174) rotate(-14)" textLength="76">Laurier St</text>
            <text transform="translate(1265 1463) rotate(-31)" textLength="130">Kichi Zībī Mīkan</text>
            <text transform="translate(1391 1511) rotate(-26)" textLength="64">Scott St</text>
            <text transform="translate(1229 1614) rotate(-28)" textLength="66">Scott St</text>
            <text transform="translate(970 1833) rotate(-36)" textLength="130">Kichi Zībī Mīkan</text>
            <text transform="translate(1140 1750) rotate(68)" textLength="123">Broadview Ave</text>
            <text transform="translate(2004 1448) rotate(75)" textLength="105">Colonel By Dr</text>
            <text transform="translate(2219 1692) rotate(-90)" textLength="101">Alta Vista Dr</text>
            <text transform="translate(2202 1760) rotate(82)" textLength="101">Alta Vista Dr</text>
            <text transform="translate(2275 1655) rotate(-5.500)" textLength="141">Pleasant Park Rd</text>
            <text transform="translate(2274 1756) rotate(-5)" textLength="94">Kilborn Ave</text>
            <text transform="translate(2709 2050) rotate(-42)" textLength="78">Blohm Dr</text>
          </g>
          <g class="prov"><text transform="translate(1106 1454) rotate(-56)" textLength="97">QUEBEC</text><text transform="translate(1132 1474) rotate(-56)" textLength="112">ONTARIO</text></g>

          <g class="hood">
            <text x="925" y="958">U</text>
            <text x="1204" y="946" textLength="172">LAC-DES-FÉES</text><text x="1160" y="1130" textLength="332">JARDINS-MACKENZIE-KING</text>
            <text x="987" y="1162" textLength="175">BIRCH MANOR</text><text x="1225" y="1256" textLength="168">VAL-TÉTREAU</text>
            <text x="2196" y="979" textLength="106" class="dark">VANIER</text><text x="2205" y="1028" textLength="181">VANIER SOUTH</text>
            <text x="1840" y="1050" textLength="163">LOWER TOWN</text><text x="1846" y="1095" textLength="103">BYWARD</text><text x="1847" y="1118" textLength="101">MARKET</text>
            <text x="2247" y="1164" textLength="148">OVERBROOK</text><text x="1853" y="1487" textLength="133">THE GLEBE</text>
            <text x="1625" y="1453.500" textLength="169">CENTRETOWN</text><text x="1675" y="1475.500" textLength="67">WEST</text>
            <text x="2548" y="958" textLength="124">MEADOWS</text><text x="2773" y="1184" textLength="117">PINEVIEW</text>
            <text x="1361" y="1564" textLength="161">FISHER PARK</text><text x="1236" y="1735.500" textLength="135">WESTBORO</text>
            <text x="1359" y="1910.500" textLength="158">CARLINGTON</text><text x="1030" y="2027" textLength="172">GLABAR PARK</text><text x="1074" y="2071" textLength="193">BRAEMAR PARK</text>
            <text x="1900" y="1651" textLength="160">OLD OTTAWA</text><text x="1939" y="1673" textLength="82">SOUTH</text>
            <text x="1754" y="1808" textLength="130">CARLETON</text><text x="1746" y="1830.500" textLength="147">UNIVERSITY</text><text x="2048" y="1772" textLength="145">ALTA VISTA</text>
            <text x="2324" y="1899.500" textLength="156">HERON GATE</text><text x="2276" y="1936" textLength="127">LEDBURY -</text><text x="2265" y="1958.500" textLength="156">HERON GATE</text><text x="2261" y="1981" textLength="163">- RIDGEMONT</text><text x="2276" y="2004" textLength="134">- ELLWOOD</text>
            <text x="2445" y="1546.500" textLength="130">ELMVALE -</text><text x="2443" y="1569" textLength="134">EASTWAY -</text><text x="2448" y="1591.500" textLength="133">RIVERVIEW</text><text x="2438" y="1614" textLength="152">- RIVERVIEW</text><text x="2444" y="1636.500" textLength="141">PARK WEST</text>
            <text x="2633" y="1585.500" textLength="204">SHEFFIELD GLEN</text><text x="2547" y="1685.500" textLength="147">URBANDALE</text><text x="2758" y="1712.500" textLength="172">RAMSAYVILLE</text>
            <text x="2473" y="2072" textLength="112" class="small">GREENBORO</text><text x="2642" y="2073" textLength="138">HUNT CLUB</text>
          </g>
          <text class="city" x="1754" y="1229" textLength="153" lengthAdjust="spacingAndGlyphs">Ottawa</text>

          <g class="poi">
            <g fill="#1e8e3e"><text x="1077" y="952" textLength="103">Gatineau</text><text x="930" y="1284" textLength="124">a Golf Club</text><text x="920" y="1319" textLength="50">Club</text><text x="1343" y="1369" textLength="219">Remic Rapids Park</text><text x="2030" y="1105" textLength="127">Strathcona</text><text x="2067" y="1131" textLength="53">Park</text><text x="2405" y="1057" textLength="226">Cosmic Adventures</text><text x="2923" y="1094">Pine View Golf Course</text><text x="996" y="1592.500" textLength="112">Westboro</text><text x="1036" y="1619" textLength="72">Beach</text><text x="1852" y="1557.500" textLength="104">TD Place</text><text x="1996" y="1815.500" textLength="116">RA Centre</text><text x="1768" y="1883" textLength="88">Vincent</text><text x="1738" y="1909.500" textLength="150">Massey Park</text><text x="1790" y="1968.500" textLength="66">Hog's</text><text x="1766" y="1995" textLength="117">Back Park</text><text x="1837" y="2048" textLength="111">Mooney's</text><text x="1842" y="2073" textLength="102">Bay Park</text></g>
            <g fill="#129eaf"><text x="928" y="1001">au</text><text x="1603" y="1060" textLength="184">National Gallery</text><text x="1670" y="1086" textLength="119">of Canada</text><text x="1388" y="1221.500" textLength="270">Canadian War Museum</text><text x="1682" y="1320" textLength="218">Canadian Museum</text><text x="1792" y="1346.500" textLength="108">of Nature</text><text x="2425" y="1465" textLength="237">Canada Science and</text><text x="2418" y="1491" textLength="243">Technology Museum</text><text x="1468" y="1730.500" textLength="222">Canada Agriculture</text><text x="1472" y="1757" textLength="217">and Food Museum</text></g>
            <g fill="#1a73e8"><text x="2290" y="1107" textLength="170">Adonis Ottawa</text><text x="2147" y="1282.500" textLength="246">Walmart Supercentre</text><text x="2493" y="1180" textLength="125">St. Laurent</text><text x="2493" y="1205.500" textLength="192">Shopping Centre</text><text x="2879" y="1299" textLength="256">Costco Business Centre</text><text x="2461" y="1336" textLength="54">SAIL</text><text x="1033" y="1669" textLength="145">MEC Ottawa</text><text x="930" y="1951" textLength="88">ngwood</text><text x="923" y="1977" textLength="96">g Centre</text><text x="1961" y="1889" textLength="161">Canadian Tire</text><text x="2010" y="1983.500" textLength="150">Value Village</text><text x="2008" y="2083" textLength="196">The Home Depot</text><text x="2648" y="1654" textLength="128">Giant Tiger</text><text x="2613" y="1775" textLength="162">Princess Auto</text></g>
            <g fill="#d93025"><text x="2091" y="1493" textLength="238">The Ottawa Hospital</text><text x="2136" y="1519" textLength="192">General Campus</text><text x="1303" y="1630" textLength="238">The Ottawa Hospital</text><text x="1382" y="1656.500" textLength="159">Civic Campus</text></g>
            <g fill="#607d8b"><text x="1927" y="1218" textLength="114">University</text><text x="1928" y="1244" textLength="113">of Ottawa</text></g>
            <text x="2891" y="1592.500" textLength="196" fill="#e37400">Shinka Sushi Bar</text>
            <g fill="#3c4043"><text x="2750" y="978">Be</text><text x="2729" y="1005">Hill-C</text><text x="2764" y="1031">W</text></g>
          </g>

          <use href="#golf" x="1077" y="1301"/><use href="#golf" x="927" y="1373"/><use href="#golf" x="2900" y="1112"/>
          <use href="#museum" x="1615" y="1283"/><use href="#museum" x="1924" y="1351"/><use href="#museum" x="2686" y="1495"/><use href="#museum" x="1714" y="1760"/>
          <use href="#spot" x="2656" y="1073"/><use href="#spot" x="1972" y="1832"/>
          <use href="#hospital" x="2351" y="1523"/><use href="#hospital" x="1563" y="1660"/>
          <use href="#shop" x="2350" y="1345"/><use href="#shop" x="2468" y="1209"/><use href="#shop" x="2856" y="1316"/><use href="#shop" x="2437" y="1353"/><use href="#shop" x="1200" y="1685"/><use href="#shop" x="1042" y="1980"/><use href="#shop" x="2145" y="1906"/><use href="#shop" x="2184" y="2001"/><use href="#shop" x="2228" y="2102"/><use href="#shop" x="2800" y="1671"/><use href="#shop" x="2799" y="1791"/>
          <g transform="translate(1319 1387)"><use href="#green"/><path d="M0-47l6 9h-3l6 8H2v5h-4v-5h-7l6-8h-3z" fill="#fff"/></g>
          <g transform="translate(1131 1622)"><use href="#green"/><path d="M-3-40q8-9 15 6l-5-2-3 2-4-3z" fill="#fff"/><path d="M3-36l-9 12M-7-38l0 0" stroke="#fff" stroke-width="2.500"/><circle cx="-9" cy="-36" r="3" fill="#fff"/></g>
          <g transform="translate(1979 1575)"><use href="#green"/><path d="M-12-38q3-4 6 0l1 4q8 3 15-2v6q-4 6-12 6-8-2-8-9z" fill="#fff"/><path d="M1-39l9-4M2-35l9-4" stroke="#fff" stroke-width="2.500"/></g>
          <g transform="translate(1812 1090)"><use href="#pin-shape" fill="#12b5cb" stroke="#0f9fb3"/><path d="M-10-37a10 10 0 0 1 20 0q0 8-5 12-5 1-5-4 0-3-4-3-6 0-6-5z" fill="#fff"/><g fill="#12b5cb"><circle cx="-5" cy="-37" r="2"/><circle cx="-2" cy="-42" r="2"/><circle cx="4" cy="-42" r="2"/><circle cx="6" cy="-36" r="2"/></g></g>
          <g transform="translate(1985 1191)"><use href="#pin-shape" fill="#78909c" stroke="#667c87"/><path d="M-13-37L0-44l13 7-13 7zM-8-32l8 5 8-5v4l-8 5-8-5zM11-37h2v9h-2z" fill="#fff"/></g>
          <g transform="translate(2484 1123)"><use href="#pin-shape" fill="#5491f5" stroke="#4380ea"/><path d="M-8-42H11l-3 10H-5zM-6-30H8v2H-6zM-12-45h5v2h-5z" fill="#fff"/><circle cx="-4" cy="-25" r="2" fill="#fff"/><circle cx="6" cy="-25" r="2" fill="#fff"/></g>
          <g transform="translate(2867 1610)"><use href="#pin-shape" fill="#f29900" stroke="#d98900"/><path d="M-8-45v6q0 3 3 3v12h3v-12q3 0 3-3v-6M-3.500-45v8M4-45q5 1 5 11H7v11H4z" fill="#fff" stroke="#fff" stroke-width=".8"/></g>

          <g class="routes">
            <path d="M1887 1142L1902 1133 1915 1130 1931 1141 1955 1202 2018 1254 2066 1268 2129 1296 2155 1357" stroke="#c93239"/>
            <path d="M2160 1358L2193 1354" stroke="#a03a6c"/>
            <path d="M2168 1365L2190 1364V1392L2188 1448 2183 1492 2158 1538 2128 1617 2129 1632 2138 1643 2129 1676 2108 1717 2071 1768 2042 1805 2028 1812 2027 1835 2003 1893 1996 1897 1985 1893 1982 1874 1970 1871 1950 1852 1933 1829 1907 1777 1863 1799" stroke="#115c95"/>
          </g>
          <path d="M2019 1806h16v8l-4 10-12-6z" fill="#115c95"/>
          <use href="#stop" x="1887" y="1145"/><use href="#stop" x="2160" y="1360"/><use href="#stop" x="2193" y="1355"/><use href="#stop" x="1860" y="1782"/>
          <g class="letter"><g transform="translate(1887 1149)"><use href="#big-pin"/><text y="-26">A</text></g><g transform="translate(1843.500 1773.500)"><use href="#big-pin"/><text y="-27">B</text></g></g>
          <rect x="2014" y="1242" width="53.500" height="34" rx="4" fill="#c93239"/><use href="#train" x="2022" y="1246" width="24" height="30" fill="#fff"/><text class="tag" x="2051" y="1267">1</text>
          <rect x="2058" y="1735" width="67" height="34" rx="4" fill="#115c95"/><use href="#bus" x="2067" y="1739" width="26" height="29" fill="#fff"/><text class="tag" x="2095" y="1760">10</text>
        </svg>
        <a class="expand"><svg width="54" height="52" viewBox="0 0 54 52"><g fill="none" stroke="#fff" stroke-width="3.200"><path d="M50 3v16l-4-4-11 11-5-6 11-11-4-5z"/><path d="M4 49V33l4 4 11-11 5 6-11 11 4 5z"/></g></svg></a>
        <div class="types"><a class="on">Map</a><a>Satellite</a></div>
        <a class="full"><svg width="34" height="34" viewBox="0 0 34 34"><path d="M0 0h11v5H5v6H0zM23 0h11v11h-5V5h-6zM0 23h5v6h6v5H0zM29 23h5v11H23v-5h6z" fill="#666"/></svg></a>
      </section>
    </div>
  </main>
</div>
</body>
</html>
```
FILE: styles.css
```css
* { box-sizing: border-box; }
body { margin: 0; width: 3165px; height: 2075px; overflow: hidden; background: #fff; font: 22.500px/28px "Open Sans", sans-serif; color: #5a5a5a; }
p { margin: 0; }
svg { display: block; flex: none; }
.sprite { position: absolute; width: 0; height: 0; }

/* header */
.header { position: relative; height: 299px; background: #fff; box-shadow: 0 0 40px rgba(0, 0, 0, .18); }
.topbar { height: 121px; background: #2d2d2d; display: flex; justify-content: flex-end; padding: 25px 47px 0 0; }
.topnav { display: flex; align-items: center; height: 62px; color: #fff; font-size: 30px; font-weight: 600; white-space: nowrap; }
.topnav a { margin-top: -2px; }
.topnav .wide { margin-left: 66px; }
.divider { width: 3px; height: 41px; background: #fff; margin: 0 34px 0 31px; }
.topnav .lang { width: 71px; height: 62px; line-height: 60px; margin: 0 0 0 26px; text-align: center; border-radius: 4px; background: #0073a2; font-weight: 700; }
.mainnav { height: 178px; display: flex; justify-content: flex-end; align-items: center; gap: 60px; padding: 0 76px 5px 0; color: #000; font-size: 30px; font-weight: 700; white-space: nowrap; }
.logo { position: absolute; left: 53px; top: 13px; width: 345px; height: 286px; }

.page { display: flex; align-items: flex-start; }
.sidebar { position: relative; width: 189px; height: 751px; flex: none; background: #f5f5f5; border-right: 7px solid #8c1618; color: #000; font-weight: 700; text-align: center; }
.side-item { display: block; padding: 36px 0 49px; white-space: nowrap; }
.side-item svg { margin: 0 auto; overflow: visible; }
.side-item:nth-child(n+3) { padding-top: 37px; padding-bottom: 48px; }
.side-item.active { height: 187px; padding-top: 50px; background: #c60c18; border-bottom: 1px solid #8c1618; color: #fff; }
.side-item text { font: 700 22px "Liberation Sans", sans-serif; fill: #b80000; }
.shade .front { filter: drop-shadow(6px 4px 4px rgba(0, 0, 0, .5)); }
.active .front { filter: drop-shadow(2px 1px 2px rgba(0, 0, 0, .4)); }

.content { padding: 75px 0 0 57px; }
.switcher { display: flex; width: 630px; height: 58px; margin: 0 0 19px 18px; border-radius: 5px; overflow: hidden; color: #fff; font-weight: 700; }
.change { display: flex; align-items: center; gap: 10px; width: 289px; padding: 0 0 5px 10px; background: #35a846; }
.tri { margin-top: 5px; border: 6px solid transparent; border-right: 8px solid #fff; border-left: 0; }
.plans { flex: 1; padding: 0 28px; background: #0073a2; text-align: right; }

.panel { background: #f5f5f5; border: 2px solid #a5a5a5; border-radius: 4px; box-shadow: 0 4px 8px rgba(0, 0, 0, .08); }
.trips { width: 2868px; height: 458px; padding: 29px 29px 0; font-weight: 700; }
.shift { display: flex; align-items: center; justify-content: center; gap: 15px; height: 39px; padding: 0 7px 1px 0; background: #dadada; border-radius: 5px; }
.shift + .trip { margin-top: 9px; height: 101px; }
.trip { display: flex; align-items: center; height: 99px; padding-bottom: 2px; border-top: 1px solid #dadada; }
.trip.selected { background: #fcd116; padding: 3px 0 0; }
.trip:nth-child(4) { height: 100px; border-bottom: 1px solid #dadada; margin-bottom: 9px; }
.arrow { width: 34px; margin: 0 21px 3px 20px; }
.time { padding-top: 3px; width: 58px; }
.track { display: flex; gap: 2px; width: 2594px; margin-left: 62px; height: 60px; }
.track + .time { margin-left: -60px; }
.seg { display: flex; align-items: center; justify-content: center; gap: 12px; height: 60px; flex: none; border-radius: 5px; color: #fff; }
.seg svg { fill: #fff; }
.foot { background: repeating-linear-gradient(45deg, #5089e0 0 24.500px, #2770e0 24.500px 48.500px); }
.wait { background: repeating-linear-gradient(45deg, #e6e6e6 0 24.500px, #f5f5f5 24.500px 48.500px); }
.red { background: #c93239; }
.blue { background: #115c95; }
.green { background: #76bc43; }

.columns { display: flex; gap: 28px; margin-top: 29px; }
.details { width: 656px; height: 1113px; flex: none; padding: 28px 46px 0 45px; }
.date { height: 37px; line-height: 36px; font-size: 30px; text-align: right; }
.summary { display: flex; justify-content: space-between; height: 100px; padding: 9px 0 0 1px; }
.duration { font-size: 33px; line-height: 34px; margin-top: -6px; }
.walking { font-size: 26px; line-height: 36px; margin-top: 2px; }
.print { width: 64px; height: 56px; display: flex; align-items: center; justify-content: center; background: #4c4c4c; border-radius: 5px; }
.leg { display: grid; grid-template-columns: 60px 70px 1fr; height: 170px; padding-left: 36px; margin-right: -40px; }
.leg.first, .leg.last, .leg.two { height: 169px; }
.when { text-align: center; }
.when > b, .what > b { display: block; padding-top: 3px; }
.when svg { margin: 15px auto 0; fill: #c0b9ac; }
.ride .when svg { margin-left: 3px; }
.ride .when svg[width="52"] { margin-left: 1px; }
.when .walkman { margin-top: 47px; }
.when .route { margin-top: -10px; }
.line { display: flex; flex-direction: column; align-items: center; gap: 7px; }
.line .pin text { font: 700 16px "Liberation Sans", sans-serif; fill: #fff; text-anchor: middle; }
.bar { width: 7px; height: 123px; }
.what { padding-left: 5px; white-space: nowrap; }
.what a { display: inline-block; margin-top: 12px; height: 27px; border-bottom: 1px solid #aaa; color: #2770e0; font-size: 20.500px; line-height: 26px; }
.desc { display: flex; margin-top: 19px; }
.desc p { width: 309px; }
.ride .desc { margin-top: 20px; }
.last .desc { margin-top: 28px; }
.last .more { margin-top: -1px; }
.more { margin-top: 7px; }
.warn { margin: 1px 0 0 21px; }

/* map */
.map { position: relative; width: 2186px; height: 1137px; flex: none; border: 1px solid #a5a5a5; border-bottom: 0; overflow: hidden; border-radius: 4px 4px 0 0; font-family: Roboto, sans-serif; }
.canvas { font-family: Roboto, sans-serif; }
.canvas path { vector-effect: non-scaling-stroke; }
.hatch path { stroke: none; }
pattern path { stroke: #fff; stroke-width: 2.200; fill: none; }
.lite { fill: #d0e6da; }
.land { fill: #e8eaed; }
.park { fill: #a8dab5; }
.sand { fill: #f0e9d8; }
.shopping { fill: #fef5dc; }
.pink { fill: #fce8e6; }
.water { fill: #9cc0f9; }
.river, .stream, .creek, .road, .minor, .rail, .border { fill: none; stroke: #9cc0f9; stroke-linejoin: round; stroke-linecap: round; }
.river { stroke-width: 17; }
.stream { stroke-width: 8; }
.creek { stroke-width: 2; }
.road { stroke: #fff; stroke-width: 5; }
.minor { stroke: #fff; stroke-width: 2.400; }
.rail { stroke: #d3d5da; stroke-width: 2; }
.border { stroke: #78797c; stroke-width: 1.600; stroke-dasharray: 4 4; }
.hw, .hw-fill, .ramps { fill: none; stroke-linejoin: round; }
.hw { stroke: #f9ab00; stroke-width: 10.500; }
.hw-fill { stroke: #ffecb8; stroke-width: 7; }
.hw #highways { stroke: inherit; }
.ramps { stroke: #f9b526; stroke-width: 3; }
.shield path { fill: #fff; stroke: #666a6e; stroke-width: 2; stroke-linejoin: round; }
.num text { font-size: 19px; font-weight: 500; fill: #3c4043; text-anchor: middle; }
.plate { font-size: 19px; font-weight: 500; fill: #fff; text-anchor: middle; }
.street text, .prov text, .hood text, .poi text, .city { paint-order: stroke; stroke: rgba(255, 255, 255, .85); stroke-width: 4.500px; stroke-linejoin: round; }
.street text { font-size: 18.500px; fill: #5b6065; }
.prov text { font-size: 25px; font-weight: 500; fill: #5b6065; }
.hood text { font-size: 20.500px; font-weight: 500; fill: #55595e; letter-spacing: 1px; }
.hood .dark { font-size: 24px; fill: #3c4043; }
.hood .small { font-size: 17px; }
.poi text { font-size: 25px; }
.city { font-size: 48px; font-weight: 500; fill: #202124; }
.routes { fill: none; stroke-width: 12; stroke-linejoin: round; }
.letter text { font: 700 35px "Liberation Sans", sans-serif; fill: #fff; text-anchor: middle; }
.tag { font-size: 25px; fill: #fff; }
.expand { position: absolute; left: 28px; top: 28px; width: 66px; height: 65px; display: flex; align-items: center; justify-content: center; border-radius: 5px; background: #4c4c4c; }
.types { position: absolute; right: 19px; top: 18px; display: flex; width: 315px; height: 75px; border-radius: 4px; background: #fff; box-shadow: 0 2px 8px rgba(0, 0, 0, .25); font-size: 33px; line-height: 76px; text-align: center; color: #565656; }
.types a { flex: 1; }
.types .on { flex: none; width: 130px; border-right: 1px solid #ddd; color: #000; font-weight: 500; }
.full { position: absolute; right: 19px; top: 132px; width: 75px; height: 75px; display: flex; align-items: center; justify-content: center; border-radius: 4px; background: #fff; box-shadow: 0 2px 8px rgba(0, 0, 0, .25); }
```
